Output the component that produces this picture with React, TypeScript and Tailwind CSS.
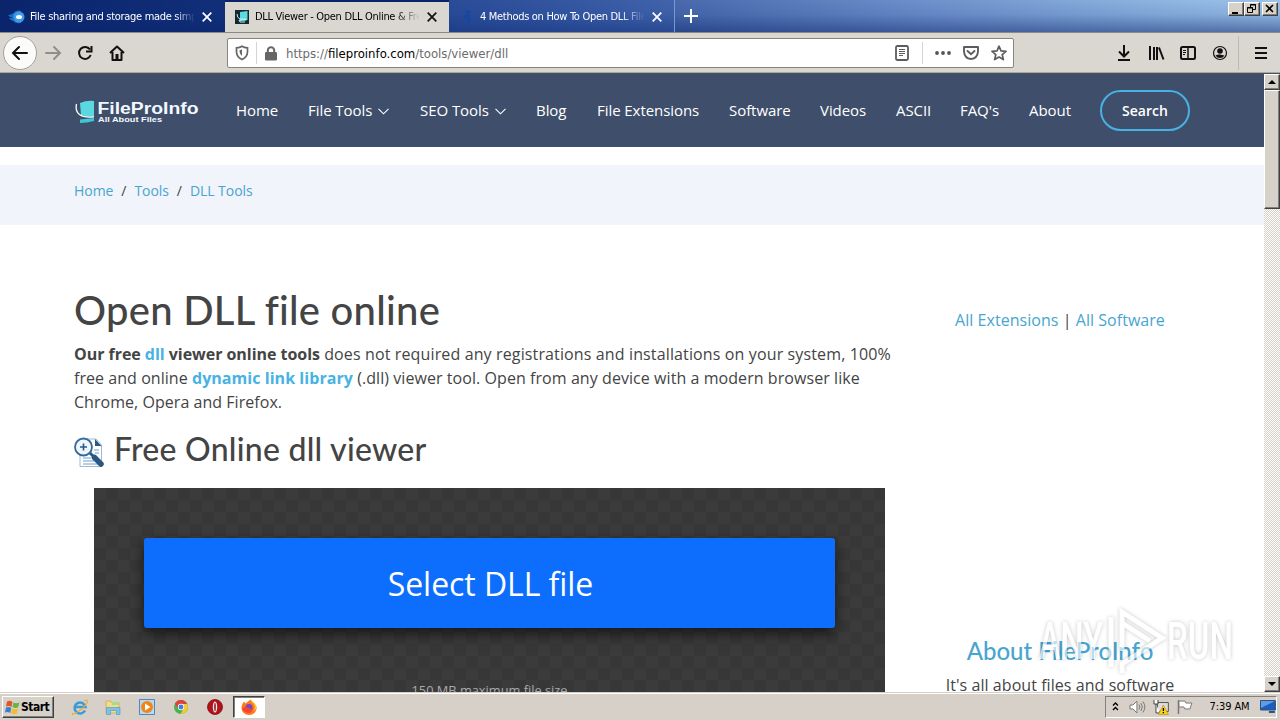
import React from 'react';

const UI = "font-['DejaVu_Sans_Condensed','DejaVu_Sans',sans-serif] [font-stretch:condensed]";
const OPEN = "font-['Open_Sans',sans-serif]";
const LATO = "font-['Lato',sans-serif] [font-variant-ligatures:none]";
const BEVEL = 'border border-t-white border-l-white border-r-[#404040] border-b-[#404040] bg-[#d6d2ca] shadow-[inset_-1px_-1px_0_#808080]';

function Close({ color }: { color: string }) {
  return (
    <svg width="10" height="10" viewBox="0 0 10 10" stroke={color} strokeWidth="1.700" className="shrink-0">
      <path d="M.7.7l8.6 8.6M9.3.7L.7 9.3" />
    </svg>
  );
}

function TitleBar() {
  return (
    <div className={`${UI} relative flex h-8 shrink-0 bg-[linear-gradient(90deg,#0a246a_0%,#12307b_20%,#3a5a9f_45%,#6f90cb_72%,#8ab0de_88%,#9fc4ea_100%)] text-[11px] tracking-[-0.3px]`}>
      <div className="pointer-events-none absolute inset-0 bg-[linear-gradient(180deg,rgba(10,36,106,0)_0%,rgba(10,50,130,0.12)_45%,rgba(10,36,106,0.5)_100%)]" />
      <div className="relative flex w-[225px] items-center pt-0.5 pl-2 text-white">
        <svg width="18" height="14" viewBox="0 0 18 14">
          <path d="M0 5Q4 5 7 1.500Q10 0 13 1V13Q8 14 5 11Q2 10 1 8L5 8Q1 7 0 5Z" fill="#1e6fc4" />
          <circle cx="11" cy="7" r="5.500" fill="#3f9be8" />
          <ellipse cx="11" cy="7" rx="3" ry="2" fill="#fff" />
        </svg>
        <span className="ml-1 w-[165px] overflow-hidden whitespace-nowrap [mask-image:linear-gradient(90deg,#000_88%,transparent)]">File sharing and storage made simple</span>
        <span className="ml-[7px]"><Close color="#fff" /></span>
      </div>
      <div className="relative flex w-[224px] items-center border-t-2 border-[#0a246a] bg-[#dad7d0] pl-[10px] text-black">
        <svg width="14" height="14" viewBox="0 0 14 14">
          <path d="M0 0H14V14H0Z" fill="#16282d" />
          <path d="M5 2L12.500 1V10L5 11Z" fill="#5adbe0" />
          <path d="M2 4Q2 8 5 9H11V10H4L5 12H10" stroke="#b9f3f4" fill="none" />
        </svg>
        <span className="ml-[6px] w-[165px] overflow-hidden whitespace-nowrap [mask-image:linear-gradient(90deg,#000_85%,transparent)]">DLL Viewer - Open DLL Online &amp; Free</span>
        <span className="ml-[7px]"><Close color="#111" /></span>
      </div>
      <div className="relative flex w-[226px] items-center border-r border-[#7b99cc] bg-[rgba(45,85,170,0.25)] pt-0.5 pl-[13px] text-white">
        <svg width="12" height="14" viewBox="0 0 12 14" fill="#1747a2">
          <circle cx="6" cy="2.500" r="2.200" />
          <path d="M2 5H8V13H5V8H2Z" />
        </svg>
        <span className="ml-1.5 w-[165px] overflow-hidden whitespace-nowrap [mask-image:linear-gradient(90deg,#000_85%,transparent)]">4 Methods on How To Open DLL Files</span>
        <span className="ml-[7px]"><Close color="#fff" /></span>
      </div>
      <div className="relative flex items-center pl-2">
        <svg width="16" height="14" viewBox="0 0 16 14" stroke="#fff" strokeWidth="2"><path d="M8 0V14M1 7H15" /></svg>
      </div>
      <div className="relative mt-0.5 mr-0.5 ml-auto flex h-[14px]">
        <div className={`${BEVEL} w-4`}><svg width="14" height="12" viewBox="0 0 14 12"><path d="M3 9h6v2H3z" /></svg></div>
        <div className={`${BEVEL} w-4`}>
          <svg width="14" height="12" viewBox="0 0 14 12" fill="none" stroke="#000"><path d="M5.500 4V1.500h5v5H8M5 2h6M2.500 4.500h5v5h-5zM2 5h6" /></svg>
        </div>
        <div className={`${BEVEL} ml-0.5 w-4`}><svg width="14" height="12" viewBox="0 0 14 12" stroke="#000" strokeWidth="1.600"><path d="M3 2l7 7M10 2l-7 7" /></svg></div>
      </div>
    </div>
  );
}

function Toolbar() {
  return (
    <div className={`${UI} flex h-[42px] shrink-0 items-center border-t border-b border-t-[#8a8a88] border-b-[#4b5159] bg-[#dad7d0] shadow-[inset_0_-1px_0_#a6a7a6]`}>
      <div className="ml-[3px] flex size-[34px] shrink-0 items-center justify-center rounded-full border border-[#a3a19c] bg-[#fbfbfa]">
        <svg width="18" height="16" viewBox="0 0 18 16" fill="none" stroke="#111" strokeWidth="2" strokeLinecap="round"><path d="M16 8H2M8 2L2 8l6 6" /></svg>
      </div>
      <svg className="ml-[7px]" width="18" height="16" viewBox="0 0 18 16" fill="none" stroke="#908e8a" strokeWidth="2" strokeLinecap="round"><path d="M2 8H16M10 2l6 6-6 6" /></svg>
      <svg className="ml-[15px]" width="16" height="16" viewBox="0 0 16 16" fill="none" stroke="#111" strokeWidth="2"><path d="M13 4.500A6 6 0 1 0 13.700 10M14.500 1v5.500H9" /></svg>
      <svg className="ml-4" width="16" height="16" viewBox="0 0 16 16" fill="none" stroke="#111" strokeWidth="2" strokeLinejoin="round"><path d="M1 8L8 1.500 15 8M3.500 7v8h9V7" /><path d="M8 9v6" strokeWidth="3" /></svg>
      <div className="ml-[102px] flex h-[30px] w-[787px] shrink-0 items-center rounded-[2px] border border-[#86847f] bg-white">
        <svg className="ml-[7px]" width="14" height="16" viewBox="0 0 14 16" fill="none" stroke="#666" strokeWidth="1.700"><path d="M1.500 2.800Q5 2.500 7 1.200 9 2.500 12.500 2.800V7Q12.300 12 7 14.500 1.700 12 1.500 7Z" /><path d="M7 4.500V11Q5 9.500 4.600 7V5.200Z" fill="#666" stroke="none" /></svg>
        <div className="ml-[7px] h-[22px] w-px bg-[#d4d4d4]" />
        <svg className="ml-2" width="12" height="15" viewBox="0 0 12 15"><path d="M2.800 7V4.500a3.200 3.200 0 016.400 0V7" fill="none" stroke="#666" strokeWidth="2" /><rect y="6" width="12" height="8.500" rx="1.200" fill="#666" /></svg>
        <span className="mt-px ml-[9px] text-[13px] text-[#6b6b6b]">https://<span className="text-black">fileproinfo.com</span>/tools/viewer/dll</span>
        <svg className="mr-[13px] ml-auto" width="14" height="16" viewBox="0 0 14 16" fill="none" stroke="#5c5c5c"><rect x="1" y="1" width="12" height="14" rx="1.500" strokeWidth="1.800" /><path d="M4 4.500h6M4 6.500h6M4 8.500h6M4 10.500h4" /></svg>
        <div className="h-[22px] w-px bg-[#d4d4d4]" />
        <svg className="ml-[12px]" width="16" height="4" viewBox="0 0 16 4" fill="#555"><circle cx="2" cy="2" r="1.900" /><circle cx="8" cy="2" r="1.900" /><circle cx="14" cy="2" r="1.900" /></svg>
        <svg className="ml-3" width="16" height="14" viewBox="0 0 16 14" fill="none" stroke="#5c5c5c" strokeWidth="1.900"><path d="M1 1H15V5.500Q14.500 12.500 8 13 1.500 12.500 1 5.500Z" strokeLinejoin="round" /><path d="M4.500 5L8 8.200 11.500 5" strokeLinecap="round" /></svg>
        <svg className="mr-1.5 ml-3" width="16" height="16" viewBox="0 0 16 16" fill="none" stroke="#5c5c5c" strokeWidth="1.700" strokeLinejoin="round"><path d="M8 1.200L10 5.800l5 .5-3.800 3.300 1.200 5L8 12l-4.400 2.600 1.200-5L1 6.300l5-.5z" /></svg>
      </div>
      <svg className="ml-[103px]" width="14" height="16" viewBox="0 0 14 16" fill="none" stroke="#111" strokeWidth="2"><path d="M7 0V11.500M2 6.500l5 5 5-5M1 15H13" /></svg>
      <svg className="ml-[17px]" width="17" height="14" viewBox="0 0 17 14" fill="none" stroke="#111" strokeWidth="2"><path d="M2 0V14M6 1V14M9 1V14M11 1.500l4.500 12" /></svg>
      <svg className="ml-[15px]" width="16" height="14" viewBox="0 0 16 14" fill="none" stroke="#111"><rect x="1" y="1" width="14" height="12" rx="1.500" strokeWidth="2" /><path d="M8 1V13" strokeWidth="1.500" /><path d="M3 4.500h3M3 6.500h3M3 8.500h2" /></svg>
      <svg className="ml-4" width="16" height="16" viewBox="0 0 16 16"><circle cx="8" cy="8" r="6.500" fill="none" stroke="#111" strokeWidth="1.200" /><circle cx="8" cy="6" r="2.800" fill="#111" /><path d="M3.500 10.500Q6 9 8 9.500T12.500 10.500Q11 13 8 13T3.500 10.500Z" fill="#111" /></svg>
      <div className="ml-[10px] h-[34px] w-px bg-[#bdbab4]" />
      <svg className="ml-4" width="12" height="12" viewBox="0 0 12 12" stroke="#111" strokeWidth="2"><path d="M0 1H12M0 6H12M0 11H12" /></svg>
    </div>
  );
}

function Logo() {
  return (
    <svg width="124" height="28" viewBox="0 0 124 28" className="mt-0.5 shrink-0">
      <path d="M5 5Q12 2 19 3V19Q12 19 6 17Z" fill="#5ad8e2" />
      <path d="M5 21.500L19 20V23Q12 25 5 25Z" fill="#3fc6d4" />
      <path d="M1.500 6Q0 13 4.500 16.500 9 20 19 18.800" fill="none" stroke="#fff" strokeWidth="1.300" />
      <text x="22.500" y="15.800" textLength="101" lengthAdjust="spacingAndGlyphs" fontSize="16" fontWeight="700" fill="#f4f8ff" fontFamily="Liberation Sans">FileProInfo</text>
      <text x="23" y="23.500" textLength="64" lengthAdjust="spacingAndGlyphs" fontSize="8" fontWeight="700" fill="#f4f8ff" fontFamily="Liberation Sans">All About Files</text>
    </svg>
  );
}

function Chevron() {
  return <svg className="mt-px ml-1.5" width="11" height="7" viewBox="0 0 11 7" fill="none" stroke="#fff" strokeWidth="1.100"><path d="M.5.8l5 5 5-5" /></svg>;
}

const navItems = [
  { label: 'Home', w: 'w-[72px]', menu: false },
  { label: 'File Tools', w: 'w-[112px]', menu: true },
  { label: 'SEO Tools', w: 'w-[116px]', menu: true },
  { label: 'Blog', w: 'w-[61px]', menu: false },
  { label: 'File Extensions', w: 'w-[132px]', menu: false },
  { label: 'Software', w: 'w-[91px]', menu: false },
  { label: 'Videos', w: 'w-[76px]', menu: false },
  { label: 'ASCII', w: 'w-[64px]', menu: false },
  { label: "FAQ's", w: 'w-[69px]', menu: false },
  { label: 'About', w: 'w-[71px]', menu: false },
];

function SiteNav() {
  return (
    <nav className="flex h-[73px] shrink-0 items-center bg-[#3f4f6b] pl-[75px] text-[15px] text-white">
      <Logo />
      <div className="ml-[37px] flex items-center tracking-[-0.06px]">
        {navItems.map((n) => (
          <a key={n.label} className={`${n.w} flex shrink-0 items-center whitespace-nowrap`}>{n.label}{n.menu && <Chevron />}</a>
        ))}
      </div>
      <a className="flex h-[41px] w-[90px] items-center justify-center rounded-full border-2 border-[#47b2e4] text-[14px] font-semibold">Search</a>
    </nav>
  );
}

function ViewerIcon() {
  return (
    <svg width="30" height="32" viewBox="0 0 30 32" className="shrink-0">
      <path d="M6 17V30.500H27.500V9L22 3H12" fill="#fff" stroke="#9db9d2" />
      <path d="M21 3v7h6.500z" fill="#2a5885" />
      <path d="M9 22h8M9 25h11M9 28h16M20 14h5M21 17h4" stroke="#9dc0df" strokeWidth="1.300" />
      <path d="M16 17L20 21" stroke="#2a5885" strokeWidth="3" />
      <path d="M20.500 21.500L27 28" stroke="#2a5885" strokeWidth="5.500" strokeLinecap="round" />
      <circle cx="9.500" cy="11" r="8.500" fill="#eef6fd" stroke="#366a9b" strokeWidth="1.800" />
      <path d="M9.500 7.500v7M6 11h7" stroke="#2a5885" strokeWidth="1.600" />
    </svg>
  );
}

function Watermark() {
  return (
    <svg className="absolute top-[529px] left-[1030px] drop-shadow-[0_0_2px_rgba(0,0,0,0.35)]" width="212" height="78" viewBox="0 0 212 78" opacity="0.62">
      <g fill="#fff" fontFamily="Roboto" fontWeight="500" fontSize="52">
        <text x="9" y="56" textLength="64" lengthAdjust="spacingAndGlyphs">ANY</text>
        <text x="137" y="56" textLength="66" lengthAdjust="spacingAndGlyphs">RUN</text>
      </g>
      <path d="M81 14V64M92 48V9L132 35 92 61V70M92 20L120 38" fill="none" stroke="#fff" strokeWidth="5" />
    </svg>
  );
}

function Page() {
  return (
    <div className={`${OPEN} relative flex w-[1264px] flex-col overflow-hidden bg-white text-[#444]`}>
      <SiteNav />
      <div className="mt-[18px] flex h-[60px] shrink-0 items-start bg-[#f1f4fb] pt-[15px] pl-[74px] text-[14px] leading-[21px] tracking-[-0.05px]">
        <a className="text-[#47a5d0]">Home</a><span className="w-[21px] text-center">/</span>
        <a className="text-[#47a5d0]">Tools</a><span className="w-[21px] text-center">/</span>
        <a className="text-[#47a5d0]">DLL Tools</a>
      </div>
      <div className="flex pl-[74px]">
        <main className="w-[832px] shrink-0 pt-[61px]">
          <h1 className={`${LATO} h-12 text-[40px] leading-[48px] font-medium tracking-[0.25px] whitespace-nowrap`}>Open DLL file online</h1>
          <p className="mt-2 text-[16px] leading-6 whitespace-nowrap">
            <b className="tracking-[-0.04px]">Our free <a className="text-[#47b2e4]">dll</a> viewer online tools</b><span className="tracking-[0.13px]"> does not required any registrations and installations on your system, 100%</span><br />
            <span className="tracking-[0.05px]">free and online <b className="text-[#47b2e4]">dynamic link library</b></span><span className="tracking-[0.065px]"> (.dll) viewer tool. Open from any device with a modern browser like</span><br />
            <span className="tracking-[0.04px]">Chrome, Opera and Firefox.</span>
          </p>
          <h2 className={`${LATO} mt-4 flex h-[38px] items-center text-[32px] leading-[38px] font-medium tracking-[0.25px] whitespace-nowrap`}>
            <span className="mt-[6px] mr-[10px]"><ViewerIcon /></span>Free Online dll viewer
          </h2>
          <div className="mt-[20px] ml-5 flex h-[260px] w-[791px] flex-col items-center bg-[repeating-conic-gradient(#373737_0_25%,#3b3b3b_0_50%)] bg-[length:24px_24px] pt-[50px]">
            <button className="h-[90px] w-[691px] shrink-0 rounded-[3px] bg-[#0d6efd] pt-0.5 pl-0.5 text-[32px] tracking-[-0.06px] text-white shadow-[0_6px_14px_rgba(0,0,0,0.6)]">Select DLL file</button>
            <p className="mt-[52px] text-[12.800px] leading-[20px] text-[#aaa]">150 MB maximum file size</p>
          </div>
        </main>
        <aside className="flex w-[308px] flex-col items-center pt-[83px]">
          <p className="text-[16px] leading-6 tracking-[0.04px]"><a className="text-[#47a5d0]">All Extensions</a> | <a className="text-[#47a5d0]">All Software</a></p>
          <h4 className={`${LATO} mt-[304px] text-[24px] leading-[29px] font-medium text-[#47a5d0]`}>About FileProInfo</h4>
          <p className="mt-2 text-[16px] leading-6 tracking-[0.06px]">It's all about files and software</p>
        </aside>
      </div>
      <Watermark />
    </div>
  );
}

function ScrollBar() {
  return (
    <div className="flex w-4 flex-col bg-[repeating-conic-gradient(#d4d0c8_0_25%,#fff_0_50%)] bg-[length:2px_2px]">
      <div className={`${BEVEL} flex h-4 items-center justify-center`}><svg width="8" height="4" viewBox="0 0 8 4"><path d="M4 0l4 4H0z" /></svg></div>
      <div className={`${BEVEL} h-[119px]`} />
      <div className={`${BEVEL} mt-auto flex h-4 items-center justify-center`}><svg width="8" height="4" viewBox="0 0 8 4"><path d="M4 4l4-4H0z" /></svg></div>
    </div>
  );
}

function TaskBar() {
  return (
    <div className={`${UI} flex h-7 shrink-0 items-center border-t border-[#d4d0c8] bg-[#d6d0c8] shadow-[inset_0_1px_0_#fff]`}>
      <div className={`${BEVEL} mt-px ml-0.5 flex h-[22px] w-[52px] items-center pl-0.5`}>
        <svg width="15" height="15" viewBox="0 0 15 15" className="shrink-0">
          <path d="M2 1.500Q5 0 7.500 2L6.500 7Q4 5.500 1 6.500Z" fill="#e2562b" /><path d="M8.500 2.500Q11 4 14.500 2.500L13 7.500Q10 8.500 7.500 7Z" fill="#6cb33f" />
          <path d="M1 7.500Q4 6.500 6.300 8L5.200 13Q3 11.500 0 12.500Z" fill="#3a7fd0" /><path d="M7.300 8.500Q10 10 13 8.500L12 13.500Q8.500 15 6 13.500Z" fill="#f3bd32" />
        </svg>
        <span className="ml-px text-[12px] font-bold tracking-[-0.5px] text-black">Start</span>
      </div>
      <svg className="ml-[17px]" width="18" height="18" viewBox="0 0 18 18" fill="none"><path d="M14 12.500A5.500 5.500 0 1 1 14.500 9H5" stroke="#3a9bd8" strokeWidth="2.600" /><path d="M2 15Q0 17 3 16 13 11 16.500 4 17 1 13 3" stroke="#e0b040" strokeWidth="1.200" /></svg>
      <svg className="ml-[15px]" width="18" height="18" viewBox="0 0 18 18"><path d="M2 3h5l1 2h7v10H2z" fill="#f2dc84" stroke="#c9a94e" strokeWidth=".7" /><path d="M8 4h6v3H8z" fill="#a9d98b" /><path d="M2.500 9.500H16V16.500H12.500V12.500H6.500V16.500H2.500Z" fill="#7ec0e8" stroke="#4b93c4" strokeWidth=".6" /></svg>
      <svg className="ml-[17px]" width="16" height="16" viewBox="0 0 16 16"><path d="M.5.500h15v15H.5z" fill="#b9daf2" stroke="#4d88bb" /><circle cx="8" cy="8" r="6" fill="#f08519" /><path d="M6 4.500L11.500 8 6 11.500z" fill="#fff" /></svg>
      <svg className="ml-[19px]" width="14" height="14" viewBox="0 0 16 16"><circle cx="8" cy="8" r="8" fill="#4caf50" /><path d="M1 4A8 8 0 0 1 15 4.500H8L4.500 9Z" fill="#e04335" /><path d="M15 4.500A8 8 0 0 1 7.500 16L11.500 9 8 4.500Z" fill="#fbc92e" /><circle cx="8" cy="8" r="3.600" fill="#fff" /><circle cx="8" cy="8" r="2.800" fill="#3f7ee0" /></svg>
      <svg className="ml-[19px]" width="16" height="16" viewBox="0 0 16 16"><circle cx="8" cy="8" r="7.500" fill="#b41219" stroke="#7e0c10" strokeWidth=".8" /><ellipse cx="8" cy="8" rx="2.200" ry="5.500" fill="#eee" /><ellipse cx="8" cy="8" rx=".8" ry="4.200" fill="#8d1014" /></svg>
      <div className="mt-px ml-[10px] flex h-[22px] w-8 items-center justify-center border border-t-[#404040] border-l-[#404040] border-r-white border-b-white bg-white shadow-[inset_1px_1px_0_#808080]">
        <svg width="16" height="16" viewBox="0 0 16 16"><path d="M8 16A7.500 7 0 0 1 .5 8.500Q.5 5 3 2.500L4.500 4.500Q7 2.500 9.500.5 10 2.500 13 4 16 7 15.500 10 14 16 8 16Z" fill="#ff7a1f" /><path d="M9.500.5Q10 3 13 5.500 15 9 12 12 15.500 11 15.500 8 15 4.500 9.500.5Z" fill="#ffc72b" /><circle cx="8" cy="8.500" r="3.600" fill="#7447c9" /><path d="M1 9Q5 7 8 9 10 11 12 9.500 11 14 7 14 2 13 1 9Z" fill="#f9442f" /></svg>
      </div>
      <div className="mr-[3px] ml-auto flex h-[22px] w-[172px] items-center border border-t-[#808080] border-l-[#808080] border-r-white border-b-white text-[11px] text-black">
        <svg className="ml-[6px]" width="7" height="9" viewBox="0 0 7 9" fill="none" stroke="#000" strokeWidth="1.400"><path d="M1 3.500l2.500-2.500L6 3.500M1 8l2.500-2.500L6 8" /></svg>
        <svg className="ml-[10px]" width="17" height="14" viewBox="0 0 17 14" fill="none" stroke="#777"><path d="M1 5h3l4-4v12l-4-4H1z" fill="#fff" /><path d="M10 4.500q2 2.500 0 5M12 3q3 4 0 8M14 1.500q4 5.500 0 11" /></svg>
        <svg className="ml-[7px]" width="16" height="16" viewBox="0 0 16 16"><path d="M4.500 3.500h11v9h-11z" fill="#ddd" stroke="#555" /><path d="M1 1v4h4V1M3 5v9h4" fill="#fff" stroke="#444" /><path d="M10.500 6l5 9.500h-10z" fill="#ffd21c" stroke="#b28b00" strokeWidth=".6" /><path d="M10.500 9v3M10.500 13v1.200" stroke="#000" strokeWidth="1.300" /></svg>
        <svg className="ml-[7px]" width="17" height="16" viewBox="0 0 17 16"><path d="M2.500 1v14" stroke="#777" strokeWidth="1.500" /><path d="M3 2h6l1 2h6l-2 6H9L8 8H3z" fill="#fff" stroke="#777" /></svg>
        <span className="mt-0.5 ml-[17px] w-[42px] tracking-[-0.1px] whitespace-nowrap">7:39 AM</span>
        <svg className="ml-[9px]" width="16" height="13" viewBox="0 0 16 13"><path d="M.5.500h15v9.500H.5z" fill="#1c5dc0" stroke="#314c74" /><path d="M1 1h14L1 8z" fill="#5d9be8" /><path d="M9 11h6v2H9z" fill="#25508e" /></svg>
      </div>
    </div>
  );
}

export default function App() {
  return (
    <div className="flex h-[720px] w-[1280px] flex-col overflow-hidden bg-white">
      <TitleBar />
      <Toolbar />
      <div className="flex h-[618px] shrink-0 overflow-hidden">
        <Page />
        <ScrollBar />
      </div>
      <TaskBar />
    </div>
  );
}
